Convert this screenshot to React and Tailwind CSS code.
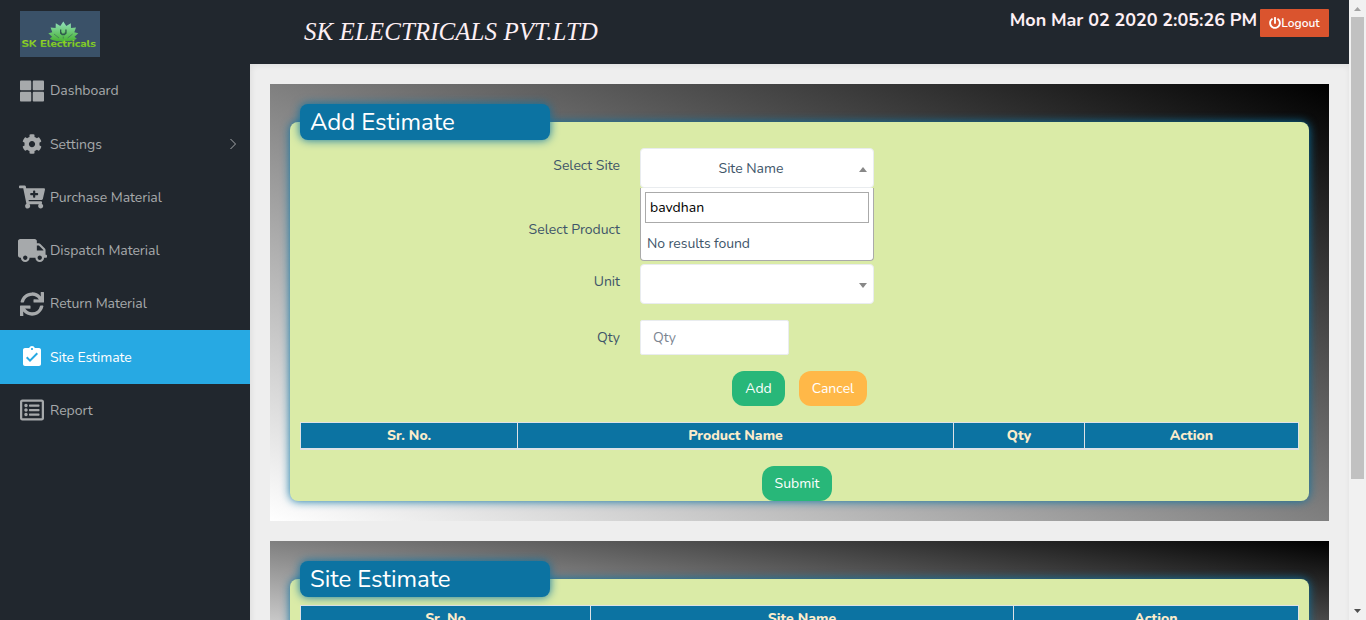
import React from "react";
import { FaThLarge, FaCog, FaCartPlus, FaTruck, FaSync, FaRegListAlt, FaPowerOff } from "react-icons/fa";
import { MdAssignmentTurnedIn } from "react-icons/md";

function Logo() {
  return (
    <svg className="block h-[46px] w-20" viewBox="0 0 80 46">
      <defs>
        <linearGradient id="lotus" x1="0" y1="0" x2="0" y2="1">
          <stop offset="0" stopColor="#93e0bd" />
          <stop offset="1" stopColor="#43b02a" />
        </linearGradient>
        <linearGradient id="word" x1="0" y1="0" x2="0" y2="1">
          <stop offset="0" stopColor="#a8e021" />
          <stop offset="1" stopColor="#62b82a" />
        </linearGradient>
      </defs>
      <rect width="80" height="46" fill="#3a5168" />
      <path
        fill="url(#lotus)"
        d="M43.300 10.500L46.300 15L50.800 12.300L51 17L56 16.600L54.300 21.200L58.300 22.300L54.500 25.800L56.800 27.800C53.500 30 49 30.500 45 30V31.500H41.600V30C37.600 30.500 33 30 29.800 27.800L32.100 25.800L28.300 22.300L32.300 21.200L30.600 16.600L35.600 17L35.800 12.300L40.300 15Z"
      />
      <path fill="#2f5a4c" d="M40 18.500h1.300v3h.7v1h2.600v-1h.7v-3h1.300v4l-2 1.700h-2.600l-2-1.700z" />
      <path fill="none" stroke="#3a5f5a" strokeWidth="0.600" d="M34 23l5 4M52.600 23l-5 4M43.300 25.500v2" />
      <text x="1.500" y="35.700" fontFamily="Nunito, sans-serif" fontSize="9" fontWeight="800" fill="url(#word)" textLength="74.500" lengthAdjust="spacingAndGlyphs">
        SK Electricals
      </text>
    </svg>
  );
}

const navItems = [
  { label: "Dashboard", icon: FaThLarge, size: 24 },
  { label: "Settings", icon: FaCog, size: 20, arrow: true },
  { label: "Purchase Material", icon: FaCartPlus, size: 26 },
  { label: "Dispatch Material", icon: FaTruck, size: 29 },
  { label: "Return Material", icon: FaSync, size: 24 },
  { label: "Site Estimate", icon: MdAssignmentTurnedIn, size: 24, active: true },
  { label: "Report", icon: FaRegListAlt, size: 24 },
];

function Sidebar() {
  return (
    <aside className="flex h-full w-[250px] shrink-0 flex-col bg-[#21272e]">
      <div className="h-16 shrink-0 pl-5 pt-[11px]">
        <Logo />
      </div>
      {navItems.map(({ label, icon: Icon, size, active, arrow }) => (
        <a
          key={label}
          className={
            "flex h-[53.300px] shrink-0 items-center text-[14px] " +
            (active ? "bg-[#27a9e3] text-white" : "text-[#a6a9ab]")
          }
        >
          <span className="ml-[14px] flex w-[36px] shrink-0 justify-center">
            <Icon size={size} className="shrink-0" />
          </span>
          <span className={arrow ? "pt-px" : "tracking-[-0.050px]"}>{label}</span>
          {arrow && (
            <svg className="ml-auto mr-[13px] h-3 w-2" viewBox="0 0 8 12" fill="none" stroke="currentColor">
              <path d="M1.500 1L6.500 6L1.500 11" />
            </svg>
          )}
        </a>
      ))}
    </aside>
  );
}

function Panel({ title, height, children }) {
  return (
    <section className={"shrink-0 bg-[linear-gradient(to_top_right,#fff,#000)] p-5 " + height}>
      <div className="relative z-10 ml-[10px] flex h-9 w-[250px] items-center rounded-lg bg-[#0c73a2] pl-[10px] text-white shadow-[0_0_10px_#0c73a2]">
        <h4 className="text-[24px] leading-9 tracking-[-0.050px]">{title}</h4>
      </div>
      <div className="-mt-[18px] rounded-lg bg-[#daeba7] shadow-[0_0_10px_#0c73a2]">{children}</div>
    </section>
  );
}

function HeadRow({ cells }) {
  return (
    <div className="mx-[10px] flex h-7 shrink-0 border border-b-2 border-[#dee2e6] bg-[#0c73a2] text-[14px] font-extrabold text-[#fbeccb]">
      {cells.map(([label, width]) => (
        <div key={label} className={"flex items-center justify-center border-r border-[#dee2e6] last:border-r-0 " + width}>
          {label}
        </div>
      ))}
    </div>
  );
}

function Label({ children, className }) {
  return <div className={"w-[350px] shrink-0 pr-5 text-right text-[14px] leading-5 " + className}>{children}</div>;
}

const Caret = ({ up }) => (
  <svg width="8" height="5" viewBox="0 0 8 5" className="absolute right-[6px] top-[18px]" fill="#888">
    <path d={up ? "M0 5L4 0L8 5z" : "M0 0L4 5L8 0z"} />
  </svg>
);

function Select({ text, up, children }) {
  return (
    <div className="relative h-10 w-[234px] shrink-0 rounded-[4px] border border-[#e9ecef] bg-white text-center text-[14px] leading-10">
      <span className="pr-3">{text}</span>
      <Caret up={up} />
      {children}
    </div>
  );
}

function AddEstimate() {
  return (
    <div className="flex h-[379px] flex-col text-[#3e5569]">
      <div className="flex pt-[26px]">
        <Label className="mt-2">Select Site</Label>
        <Select text="Site Name" up>
          <div className="absolute -left-px top-[39px] z-20 h-[73px] w-[234px] rounded-b-[4px] border border-t-0 border-[#aaa] bg-white p-1 text-left">
            <input
              readOnly
              value="bavdhan"
              className="block h-[31px] w-full border border-[#aaa] px-1 text-[14px] text-black outline-none"
            />
            <div className="pl-[2px] pt-[11px] leading-5 tracking-[-0.080px]">No results found</div>
          </div>
        </Select>
      </div>
      <div className="flex h-[76px] items-start">
        <Label className="mt-8">Select Product</Label>
      </div>
      <div className="flex h-10">
        <Label className="mt-2">Unit</Label>
        <Select text="" />
      </div>
      <div className="mt-4 flex h-[35px]">
        <Label className="mt-2">Qty</Label>
        <input placeholder="Qty" className="block w-[149px] rounded-[2px] border border-[#e9ecef] bg-white px-3 text-[14px] placeholder:text-[#7c8591]" />
      </div>
      <div className="mt-4 flex gap-[14px] pl-[442px] text-[14px] text-white">
        <button className="h-[35px] w-[53px] rounded-xl bg-[#28b779]">Add</button>
        <button className="h-[35px] w-[68px] rounded-xl bg-[#ffb848]">Cancel</button>
      </div>
      <div className="mt-4 flex flex-col">
        <HeadRow
          cells={[
            ["Sr. No.", "w-[217px]"],
            ["Product Name", "w-[436px]"],
            ["Qty", "w-[131px]"],
            ["Action", "flex-1"],
          ]}
        />
      </div>
      <button className="ml-[472px] mt-4 h-[35px] w-[70px] rounded-xl bg-[#28b779] text-[14px] text-white">Submit</button>
    </div>
  );
}

export default function App() {
  return (
    <div className="flex h-[620px] w-[1366px] overflow-hidden bg-[#eeeeee] font-['Nunito','Lato',sans-serif]">
      <Sidebar />
      <div className="flex h-full w-[1099px] shrink-0 flex-col">
        <header className="flex h-16 shrink-0 items-start bg-[#21272e] pr-5 text-[#fdeff4]">
          <h1 className="ml-[54px] mt-[14px] font-['Liberation_Serif',serif] text-[25px] italic leading-9 tracking-[0.050px]">SK ELECTRICALS PVT.LTD</h1>
          <div className="ml-auto mt-[7px] text-[18px] font-bold leading-[27px] tracking-[-0.050px]">Mon Mar 02 2020 2:05:26 PM</div>
          <button className="ml-[3px] mt-[9px] flex h-7 w-[69px] items-center justify-center rounded-[1px] bg-[#da542e] text-[12px] font-semibold text-white">
            <FaPowerOff size={12} />
            <span>Logout</span>
          </button>
        </header>
        <main className="flex flex-col gap-5 p-5 shadow-[inset_1px_1px_6px_rgba(0,0,0,0.08)]">
          <Panel title="Add Estimate" height="h-[437px]">
            <AddEstimate />
          </Panel>
          <Panel title="Site Estimate" height="h-[140px]">
            <div className="h-[82px] pt-[26px]">
              <HeadRow
                cells={[
                  ["Sr. No", "w-[290px]"],
                  ["Site Name", "w-[423px]"],
                  ["Action", "flex-1"],
                ]}
              />
            </div>
          </Panel>
        </main>
      </div>
      <div className="flex h-full w-[17px] shrink-0 flex-col items-center bg-[#f1f1f1]">
        <svg width="17" height="17" viewBox="0 0 17 17" fill="#a3a3a3">
          <path d="M5 11L8.500 7L12 11z" />
        </svg>
        <div className="h-[462px] w-[13px] bg-[#c1c1c1]" />
        <svg className="mt-auto" width="17" height="17" viewBox="0 0 17 17" fill="#505050">
          <path d="M5 6L8.500 10L12 6z" />
        </svg>
      </div>
    </div>
  );
}
